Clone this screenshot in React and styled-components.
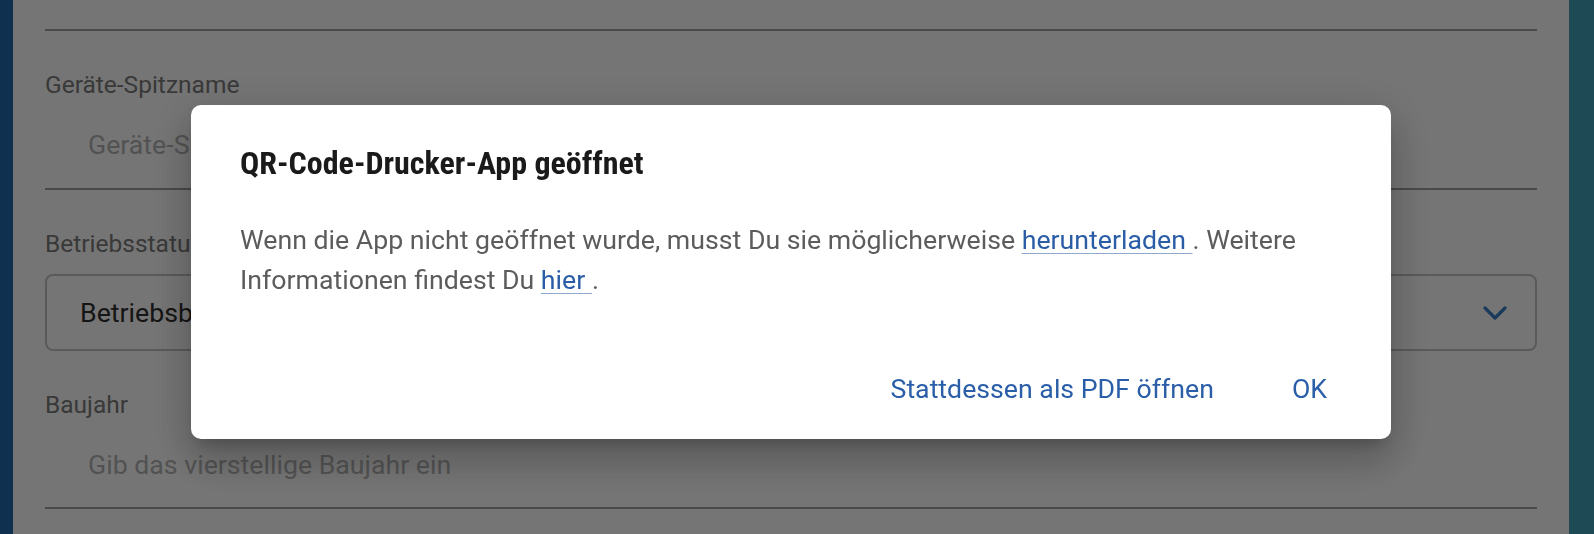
import React from "react";
import styled, { createGlobalStyle } from "styled-components";

const Global = createGlobalStyle`
  html, body { margin: 0; padding: 0; }
  body { font-family: Roboto, "Noto Sans", sans-serif; background: #fff; overflow: hidden; }
  * { box-sizing: border-box; }
`;

const Page = styled.div`
  display: flex;
  width: 1594px;
  height: 534px;
  overflow: hidden;
`;

const Strip = styled.div`
  flex: 0 0 ${(p) => p.$w}px;
  background: ${(p) => p.$c};
`;

const Main = styled.main`
  flex: 1;
  padding: 0 32px;
  display: flex;
  flex-direction: column;
  gap: 40px;
  background: #fff;
`;

const Field = styled.div`
  display: flex;
  flex-direction: column;
  gap: 16px;
`;

const Label = styled.label`
  font-size: 24.5px;
  line-height: 28px;
  color: #7c7c7c;
`;

const TextInput = styled.div`
  height: ${(p) => p.$h || 75}px;
  padding: 15px 0 0 43px;
  border-bottom: 2px solid #a0a0a0;
  font-size: 26.7px;
  line-height: 30px;
  color: #b4b4b4;
  white-space: nowrap;
  overflow: hidden;
`;

const Select = styled.div`
  height: 77px;
  border: 2px solid #c4c4c4;
  border-radius: 8px;
  display: flex;
  align-items: center;
  justify-content: space-between;
  padding: 0 28px 0 33px;
  font-size: 26.7px;
  color: #2e2e2e;
`;

const Backdrop = styled.div`
  position: fixed;
  inset: 0;
  background: rgba(0, 0, 0, 0.54);
`;

const Dialog = styled.div`
  position: fixed;
  left: 191px;
  top: 105px;
  width: 1200px;
  height: 334px;
  background: #fff;
  border-radius: 10px;
  box-shadow: 0 11px 15px -7px rgba(0, 0, 0, 0.2), 0 24px 38px 3px rgba(0, 0, 0, 0.14),
    0 9px 46px 8px rgba(0, 0, 0, 0.12);
  padding-top: 38px;
  display: flex;
  flex-direction: column;
`;

const Title = styled.h2`
  margin: 0;
  padding: 0 49px;
  font-family: Roboto, sans-serif;
  font-weight: 700;
  font-size: 32px;
  line-height: 40px;
  color: #1a1a1a;
  font-stretch: condensed;
`;

const Body = styled.p`
  margin: 37px 0 0;
  padding: 0 49px;
  font-size: 26.7px;
  line-height: 40px;
  color: #5c5c5c;
`;

const Link = styled.a`
  color: #2a5da6;
  text-decoration: underline;
  text-decoration-color: #8fa9cf;
  text-decoration-thickness: 1px;
  text-underline-offset: 4px;
`;

const Actions = styled.div`
  margin-top: auto;
  margin-bottom: 32px;
  display: flex;
  justify-content: flex-end;
  gap: 30px;
  padding-right: 40px;
`;

const Button = styled.button`
  border: 0;
  background: none;
  font-family: Roboto, sans-serif;
  font-size: 26.7px;
  line-height: 36px;
  color: #2a5ea8;
  padding: 0 24px;
  cursor: pointer;
`;

const Chevron = () => (
  <svg width="24" height="16" viewBox="0 0 24 16">
    <path d="M2 3 L12 13 L22 3" fill="none" stroke="#3a7ec8" strokeWidth="3.2" strokeLinecap="round" strokeLinejoin="round" />
  </svg>
);

export default function App() {
  return (
    <>
      <Global />
      <Page>
        <Strip $w={13} $c="#236aad" />
        <Main>
          <TextInput $h={31} />
          <Field>
            <Label>Geräte-Spitzname</Label>
            <TextInput>Geräte-Spitzname eingeben</TextInput>
          </Field>
          <Field>
            <Label>Betriebsstatus</Label>
            <Select>
              <span>Betriebsbereit</span>
              <Chevron />
            </Select>
          </Field>
          <Field>
            <Label>Baujahr</Label>
            <TextInput $h={74}>Gib das vierstellige Baujahr ein</TextInput>
          </Field>
        </Main>
        <Strip $w={25} $c="#41a1b9" />
      </Page>
      <Backdrop />
      <Dialog role="dialog">
        <Title>QR-Code-Drucker-App geöffnet</Title>
        <Body>
          Wenn die App nicht geöffnet wurde, musst Du sie möglicherweise{" "}
          <Link href="#">herunterladen </Link>. Weitere Informationen findest Du{" "}
          <Link href="#">hier </Link>.
        </Body>
        <Actions>
          <Button>Stattdessen als PDF öffnen</Button>
          <Button>OK</Button>
        </Actions>
      </Dialog>
    </>
  );
}
